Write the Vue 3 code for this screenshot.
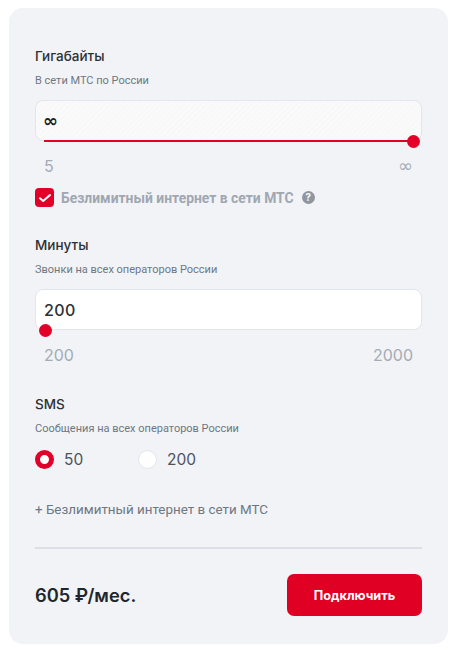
<template>
  <div class="calc">
    <section class="group">
      <h3 class="group-title">Гигабайты</h3>
      <p class="group-sub">В сети МТС по России</p>
      <div class="field field-disabled">
        <span class="field-value inf">∞</span>
        <div class="track"></div>
        <div class="thumb thumb-end"></div>
      </div>
      <div class="limits">
        <span>5</span>
        <span class="limit-inf">∞</span>
      </div>
      <div class="check-row">
        <span class="checkbox">
          <svg width="14" height="10" viewBox="0 0 14 10" fill="none">
            <path d="M2 5.2 5.2 8 12 2" stroke="#fff" stroke-width="2" stroke-linecap="round" stroke-linejoin="round" />
          </svg>
        </span>
        <span class="check-label">Безлимитный интернет в сети МТС</span>
        <span class="hint">?</span>
      </div>
    </section>

    <section class="group group-min">
      <h3 class="group-title">Минуты</h3>
      <p class="group-sub">Звонки на всех операторов России</p>
      <div class="field">
        <span class="field-value">200</span>
        <div class="thumb thumb-start"></div>
      </div>
      <div class="limits">
        <span>200</span>
        <span>2000</span>
      </div>
    </section>

    <section class="group group-sms">
      <h3 class="group-title">SMS</h3>
      <p class="group-sub">Сообщения на всех операторов России</p>
      <div class="radios">
        <label v-for="opt in smsOptions" :key="opt" class="radio">
          <span class="radio-dot" :class="{ active: opt === sms }"></span>
          <span class="radio-text">{{ opt }}</span>
        </label>
      </div>
    </section>

    <p class="extra">+ Безлимитный интернет в сети МТС</p>

    <div class="footer">
      <span class="price">605 ₽/мес.</span>
      <button class="connect" type="button">Подключить</button>
    </div>
  </div>
</template>

<script setup>
import { ref } from 'vue';

const smsOptions = [50, 200];
const sms = ref(50);
</script>

<style scoped>
.calc {
  box-sizing: border-box;
  width: 439px;
  height: 636px;
  margin: 8px 0 0 9px;
  padding: 39px 26px 0;
  background: #f1f3f7;
  border-radius: 14px;
  font-family: Inter, "Noto Sans", sans-serif;
  color: #2c3135;
}

.group-title {
  margin: 0;
  font-size: 13.5px;
  line-height: 18px;
  font-weight: 500;
  color: #2c3135;
}

.group-sub {
  margin: 9px 0 0;
  font-family: Roboto, sans-serif;
  font-size: 11px;
  line-height: 14px;
  color: #6e7782;
}

.field {
  position: relative;
  box-sizing: border-box;
  height: 41px;
  margin-top: 12px;
  padding: 0 8px;
  display: flex;
  align-items: center;
  background: #fff;
  border: 1px solid #e2e5eb;
  border-radius: 8px;
}

.field-disabled {
  background: repeating-linear-gradient(135deg, #fafafa 0 2px, #f8f8f8 2px 4px);
}

.field-value {
  font-size: 16px;
  font-weight: 500;
  letter-spacing: 0.4px;
  color: #2c3135;
}

.inf {
  margin-left: -1px;
  font-family: "DejaVu Sans", sans-serif;
  font-weight: 700;
  font-size: 18px;
  letter-spacing: 0;
  color: #1d2023;
}

.track {
  position: absolute;
  left: 8px;
  right: 8px;
  bottom: -2px;
  height: 2px;
  background: #e30028;
}

.thumb {
  position: absolute;
  bottom: -8px;
  width: 13px;
  height: 13px;
  border-radius: 50%;
  background: #e30028;
}

.thumb-end {
  right: 1px;
}

.thumb-start {
  left: 3px;
}

.limits {
  display: flex;
  justify-content: space-between;
  margin-top: 15px;
  padding: 0 9px;
  font-size: 16px;
  line-height: 20px;
  color: #a4abb5;
}

.limit-inf {
  font-family: "DejaVu Sans", sans-serif;
  font-size: 18px;
}

.check-row {
  display: flex;
  align-items: center;
  margin-top: 12px;
}

.checkbox {
  flex: none;
  width: 19px;
  height: 19px;
  display: flex;
  align-items: center;
  justify-content: center;
  background: #e30028;
  border-radius: 4px;
}

.check-label {
  margin-left: 7px;
  font-family: Roboto, sans-serif;
  font-size: 13.9px;
  font-weight: 700;
  color: #a0a7b1;
}

.hint {
  width: 13px;
  height: 13px;
  margin-left: 8px;
  border-radius: 50%;
  background: #8f96a0;
  color: #f1f3f7;
  font-size: 10px;
  font-weight: 800;
  line-height: 13px;
  text-align: center;
}

.group-min {
  margin-top: 29px;
}

.group-sms {
  margin-top: 30px;
}

.radios {
  display: flex;
  margin-top: 14px;
}

.radio {
  display: flex;
  align-items: center;
  width: 103px;
}

.radio-dot {
  box-sizing: border-box;
  width: 19px;
  height: 19px;
  background: #fff;
  border: 1px solid #e2e5eb;
  border-radius: 50%;
}

.radio-dot.active {
  border: 5.5px solid #e30028;
}

.radio-text {
  margin-left: 10px;
  font-size: 15.5px;
  font-weight: 400;
  color: #4d5259;
}

.extra {
  margin: 32px 0 0;
  font-family: Roboto, sans-serif;
  font-size: 13.4px;
  line-height: 18px;
  color: #6e7782;
}

.footer {
  display: flex;
  align-items: center;
  justify-content: space-between;
  margin-top: 28px;
  padding-top: 25px;
  border-top: 2px solid #dcdfe6;
}

.price {
  font-size: 18.3px;
  font-weight: 600;
  color: #22262a;
}

.connect {
  width: 135px;
  height: 42px;
  border: 0;
  border-radius: 7px;
  background: #e00024;
  color: #fff;
  font-family: Inter, sans-serif;
  font-size: 12.7px;
  font-weight: 700;
}
</style>
